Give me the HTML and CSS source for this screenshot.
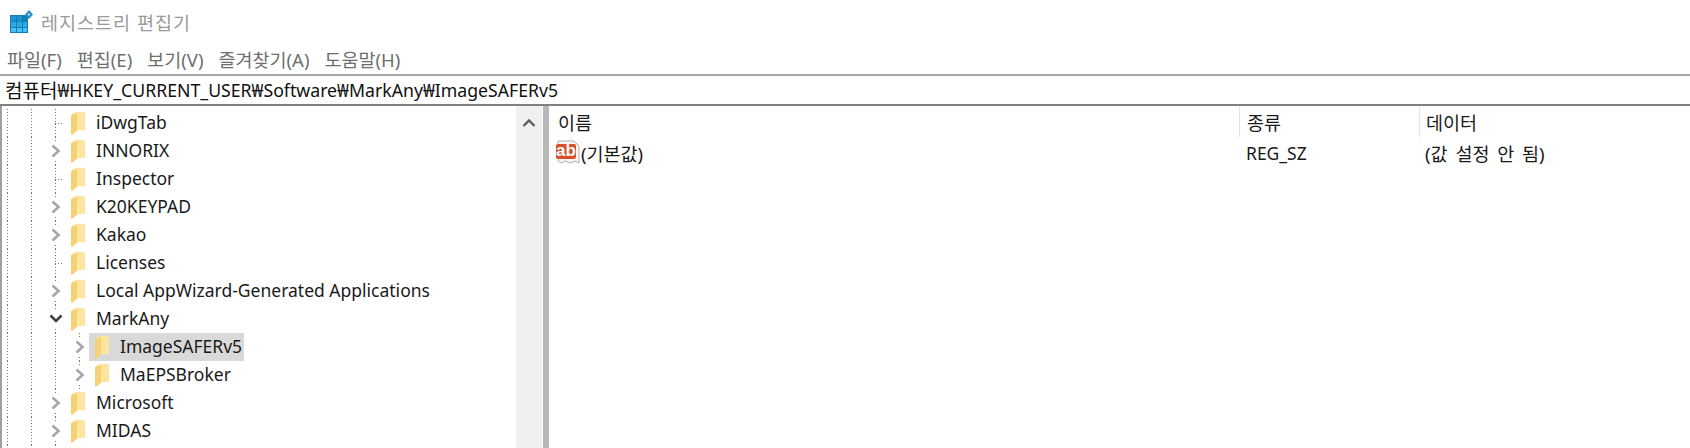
FILE: index.html
```html
<!DOCTYPE html>
<html lang="ko">
<head>
    <meta charset="UTF-8">
    <meta name="viewport" content="width=device-width, initial-scale=1.0">
    <title>레지스트리 편집기</title>
    <link rel="stylesheet" href="styles.css">
</head>
<body>
    <svg class="defs" width="0" height="0">
        <defs>
            <symbol id="folder" viewBox="0 0 14 23">
                <path d="M1 2 L5 0 H13 Q14 0 14 1 V18 H1 Z" fill="#fde5a0"/>
                <path d="M0 3 L6 1 V19 L1 23 L0 22 Z" fill="#f6d277"/>
            </symbol>
            <symbol id="arrowRight" viewBox="0 0 12 14">
                <path d="M2.5 1.5 L8.5 7 L2.5 12.5" fill="none" stroke="#a6a6a6" stroke-width="2.6"/>
            </symbol>
            <symbol id="arrowDown" viewBox="0 0 14 12">
                <path d="M1.5 2.5 L7 8 L12.5 2.5" fill="none" stroke="#404040" stroke-width="2.6"/>
            </symbol>
        </defs>
    </svg>

    <div class="titlebar">
        <svg class="app-icon" width="24" height="24" viewBox="0 0 24 24">
            <rect x="1" y="5" width="18" height="18" fill="#0f7fb8"/>
            <rect x="2" y="6" width="5" height="5" fill="#1f93cf"/>
            <rect x="8" y="6" width="5" height="5" fill="#1f93cf"/>
            <rect x="2" y="12" width="5" height="5" fill="#2ea8e2"/>
            <rect x="8" y="12" width="5" height="5" fill="#2ea8e2"/>
            <rect x="14" y="12" width="4" height="5" fill="#2ea8e2"/>
            <rect x="2" y="18" width="5" height="4" fill="#4cc0f2"/>
            <rect x="8" y="18" width="5" height="4" fill="#4cc0f2"/>
            <rect x="14" y="18" width="4" height="4" fill="#4cc0f2"/>
            <path d="M20 0 L24 4.5 L20 9 L16 4.5 Z" fill="#2b8fc4"/>
            <path d="M20 3 L21.5 4.5 L20 6 L18.5 4.5 Z" fill="#9ad8f2"/>
        </svg>
        <span class="app-title">레지스트리 편집기</span>
    </div>

    <div class="menubar">
        <span>파일(F)</span>
        <span>편집(E)</span>
        <span>보기(V)</span>
        <span>즐겨찾기(A)</span>
        <span>도움말(H)</span>
    </div>

    <div class="addressbar"><span class="address-root">컴퓨터</span>₩HKEY_CURRENT_USER₩Software₩MarkAny₩ImageSAFERv5</div>

    <div class="panes">
        <div class="tree">
            <div class="tree-rows">
                <div class="row"><span class="guide"></span><span class="guide"></span><span class="node leaf"></span><svg class="folder"><use href="#folder"/></svg><span class="label">iDwgTab</span></div>
                <div class="row"><span class="guide"></span><span class="guide"></span><span class="node"><svg class="arrow"><use href="#arrowRight"/></svg></span><svg class="folder"><use href="#folder"/></svg><span class="label">INNORIX</span></div>
                <div class="row"><span class="guide"></span><span class="guide"></span><span class="node leaf"></span><svg class="folder"><use href="#folder"/></svg><span class="label">Inspector</span></div>
                <div class="row"><span class="guide"></span><span class="guide"></span><span class="node"><svg class="arrow"><use href="#arrowRight"/></svg></span><svg class="folder"><use href="#folder"/></svg><span class="label">K20KEYPAD</span></div>
                <div class="row"><span class="guide"></span><span class="guide"></span><span class="node"><svg class="arrow"><use href="#arrowRight"/></svg></span><svg class="folder"><use href="#folder"/></svg><span class="label">Kakao</span></div>
                <div class="row"><span class="guide"></span><span class="guide"></span><span class="node leaf"></span><svg class="folder"><use href="#folder"/></svg><span class="label">Licenses</span></div>
                <div class="row"><span class="guide"></span><span class="guide"></span><span class="node"><svg class="arrow"><use href="#arrowRight"/></svg></span><svg class="folder"><use href="#folder"/></svg><span class="label">Local AppWizard-Generated Applications</span></div>
                <div class="row"><span class="guide"></span><span class="guide"></span><span class="node"><svg class="arrow-down"><use href="#arrowDown"/></svg></span><svg class="folder"><use href="#folder"/></svg><span class="label">MarkAny</span></div>
                <div class="row"><span class="guide"></span><span class="guide"></span><span class="guide"></span><span class="node"><svg class="arrow"><use href="#arrowRight"/></svg></span><span class="selected"><svg class="folder"><use href="#folder"/></svg><span class="label">ImageSAFERv5</span></span></div>
                <div class="row"><span class="guide"></span><span class="guide"></span><span class="guide"></span><span class="node"><svg class="arrow"><use href="#arrowRight"/></svg></span><svg class="folder"><use href="#folder"/></svg><span class="label">MaEPSBroker</span></div>
                <div class="row"><span class="guide"></span><span class="guide"></span><span class="node"><svg class="arrow"><use href="#arrowRight"/></svg></span><svg class="folder"><use href="#folder"/></svg><span class="label">Microsoft</span></div>
                <div class="row"><span class="guide"></span><span class="guide"></span><span class="node"><svg class="arrow"><use href="#arrowRight"/></svg></span><svg class="folder"><use href="#folder"/></svg><span class="label">MIDAS</span></div>
                <div class="row"><span class="guide"></span><span class="guide"></span><span class="node"></span><svg class="folder"><use href="#folder"/></svg></div>
            </div>
            <div class="scrollbar">
                <svg width="14" height="10" viewBox="0 0 14 10"><path d="M1.5 8 L7 2.5 L12.5 8" fill="none" stroke="#606060" stroke-width="2.4"/></svg>
            </div>
        </div>

        <div class="values">
            <div class="list-head">
                <span class="col-name">이름</span>
                <span class="col-type">종류</span>
                <span class="col-data">데이터</span>
            </div>
            <div class="list-row">
                <span class="col-name">
                    <svg class="value-icon" width="24" height="24" viewBox="0 0 24 24">
                        <path d="M2 1 H18 L23 6 V23 L19 21 L14 23 L9 21 L5 23 L2 21 Z" fill="#f6f6f6" stroke="#b0b0b0"/>
                        <rect x="0" y="4" width="20" height="15" rx="2" fill="#d9512c"/>
                        <text x="10" y="16" class="value-icon-text">ab</text>
                    </svg>
                    (기본값)
                </span>
                <span class="col-type reg-type">REG_SZ</span>
                <span class="col-data no-value">(값 설정 안 됨)</span>
            </div>
        </div>
    </div>
</body>
</html>
```

FILE: styles.css
```css
* {
    margin: 0;
    padding: 0;
    box-sizing: border-box;
}

body {
    width: 1690px;
    height: 448px;
    overflow: hidden;
    background-color: white;
    color: #1a1a1a;
    font-family: "Noto Sans", "Noto Sans CJK KR", sans-serif;
    font-size: 17.5px;
}

.defs {
    position: absolute;
}

.titlebar {
    display: flex;
    align-items: center;
    height: 40px;
    padding: 3px 0 0 9px;
}

.app-icon {
    margin-right: 8px;
}

.app-title {
    color: #9a9a9a;
    font-size: 18.5px;
    letter-spacing: 1px;
}

.menubar {
    display: flex;
    gap: 15px;
    align-items: center;
    height: 34px;
    padding: 3px 0 0 7px;
    color: #6e6e6e;
    font-size: 18.5px;
}

.addressbar {
    display: flex;
    align-items: center;
    height: 32px;
    border-top: 2px solid #a8a8a8;
    border-bottom: 2px solid #808080;
    padding-left: 5px;
    font-size: 17.7px;
    color: #111;
}

.address-root {
    font-size: 19px;
}

.panes {
    display: flex;
    height: 342px;
}

.tree {
    display: flex;
    width: 549px;
    flex-shrink: 0;
    border-left: 2px solid #a0a0a0;
    border-right: 6px solid #b8b8b8;
}

.tree-rows {
    flex: 1;
    height: 342px;
    overflow: hidden;
    padding: 3px 0 0 5px;
}

.row {
    display: flex;
    align-items: center;
    height: 28px;
}

.guide {
    align-self: stretch;
    width: 24px;
    flex-shrink: 0;
    background: repeating-linear-gradient(to bottom, #777 0, #777 1px, transparent 1px, transparent 3px) left top / 1px 100% no-repeat;
}

.node {
    display: flex;
    align-items: center;
    justify-content: center;
    align-self: stretch;
    width: 16px;
    margin-left: -7px;
    margin-right: 7px;
    flex-shrink: 0;
    background:
        repeating-linear-gradient(to bottom, #777 0, #777 1px, transparent 1px, transparent 3px) 7px top / 1px 4px no-repeat,
        repeating-linear-gradient(to bottom, #777 0, #777 1px, transparent 1px, transparent 3px) 7px bottom / 1px 4px no-repeat;
}

.leaf {
    background:
        repeating-linear-gradient(to bottom, #777 0, #777 1px, transparent 1px, transparent 3px) 7px top / 1px 100% no-repeat,
        repeating-linear-gradient(to right, #777 0, #777 1px, transparent 1px, transparent 3px) 7px center / 9px 1px no-repeat;
}

.arrow {
    width: 12px;
    height: 14px;
}

.arrow-down {
    width: 14px;
    height: 12px;
}

.folder {
    width: 14px;
    height: 23px;
    flex-shrink: 0;
    margin: 0 11px 0 0;
}

.label {
    white-space: nowrap;
    padding-bottom: 2px;
}

.selected {
    display: flex;
    align-items: center;
    align-self: stretch;
    background-color: #d9d9d9;
    padding: 0 2px 0 6px;
    margin-left: -6px;
}

.scrollbar {
    width: 27px;
    flex-shrink: 0;
    background-color: #f0f0f0;
    border-right: 1px solid white;
    display: flex;
    justify-content: center;
    padding-top: 12px;
}

.values {
    flex: 1;
    min-width: 0;
    font-size: 18.5px;
}

.list-head,
.list-row {
    display: flex;
    align-items: center;
}

.list-head {
    height: 31px;
}

.list-row {
    height: 32px;
}

.col-name {
    display: flex;
    align-items: center;
    width: 690px;
    padding-left: 9px;
}

.list-row .col-name {
    padding-left: 7px;
}

.col-type {
    width: 180px;
    padding-left: 7px;
}

.col-data {
    padding-left: 6px;
}

.reg-type {
    font-size: 17.5px;
}

.no-value {
    word-spacing: 3px;
}

.list-head .col-type,
.list-head .col-data {
    align-self: stretch;
    display: flex;
    align-items: center;
    border-left: 1px solid #e5e5e5;
}

.value-icon {
    margin: -3px 1px 0 0;
    overflow: visible;
}

.value-icon-text {
    fill: white;
    font-family: "Liberation Sans", sans-serif;
    font-size: 17px;
    font-weight: 700;
    text-anchor: middle;
}
```
